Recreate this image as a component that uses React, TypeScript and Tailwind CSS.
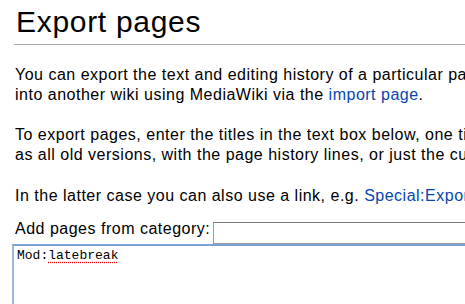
export default function App() {
  return (
    <div className="w-[465px] h-[304px] overflow-hidden bg-white text-black font-['Liberation_Sans',Arial,sans-serif]">
      <div className="pl-[14px] pt-[5px] w-[1000px]">
        <h1 className="text-[30px] leading-[34px] tracking-[0.7px] pl-[2px] pb-[5px] border-b border-[#aaaaaa]">
          Export pages
        </h1>
        <div className="pl-[1px] text-[16px] leading-[20px] tracking-[0.5px] whitespace-nowrap">
          <p className="mt-[20px]">
            You can export the text and editing history of a particular page or set of pages wrapped in some XML. This can be imported
            <br />
            into another wiki using MediaWiki via the{" "}
            <a className="text-[#0645ad]">import page</a>.
          </p>
          <p className="mt-[20px]">
            To export pages, enter the titles in the text box below, one title per line, and select whether you want the current version as well
            <br />
            as all old versions, with the page history lines, or just the current version with the information about the last edit.
          </p>
          <p className="mt-[21px]">
            In the latter case you can also use a link, e.g.{" "}
            <a className="text-[#0645ad]">Special:Export/MediaWiki</a> for the page "MediaWiki".
          </p>
          <div className="mt-[16px] flex items-start gap-[3px]">
            <span className="-mt-[3px]">Add pages from category:</span>
            <div className="w-[300px] h-[22px] border border-[#999] border-t-[#777] bg-white" />
          </div>
        </div>
        <div className="-ml-[2px] w-[500px] h-[80px] border-2 border-[#9ab7dc] border-t-[#7aa2d6] bg-white px-[3px] py-[2px] font-['Liberation_Mono','Courier_New',monospace] text-[13px] leading-[16px]">
          Mod:<span className="underline decoration-dotted decoration-[#d00] underline-offset-[3px]">latebreak</span>
        </div>
      </div>
    </div>
  );
}
